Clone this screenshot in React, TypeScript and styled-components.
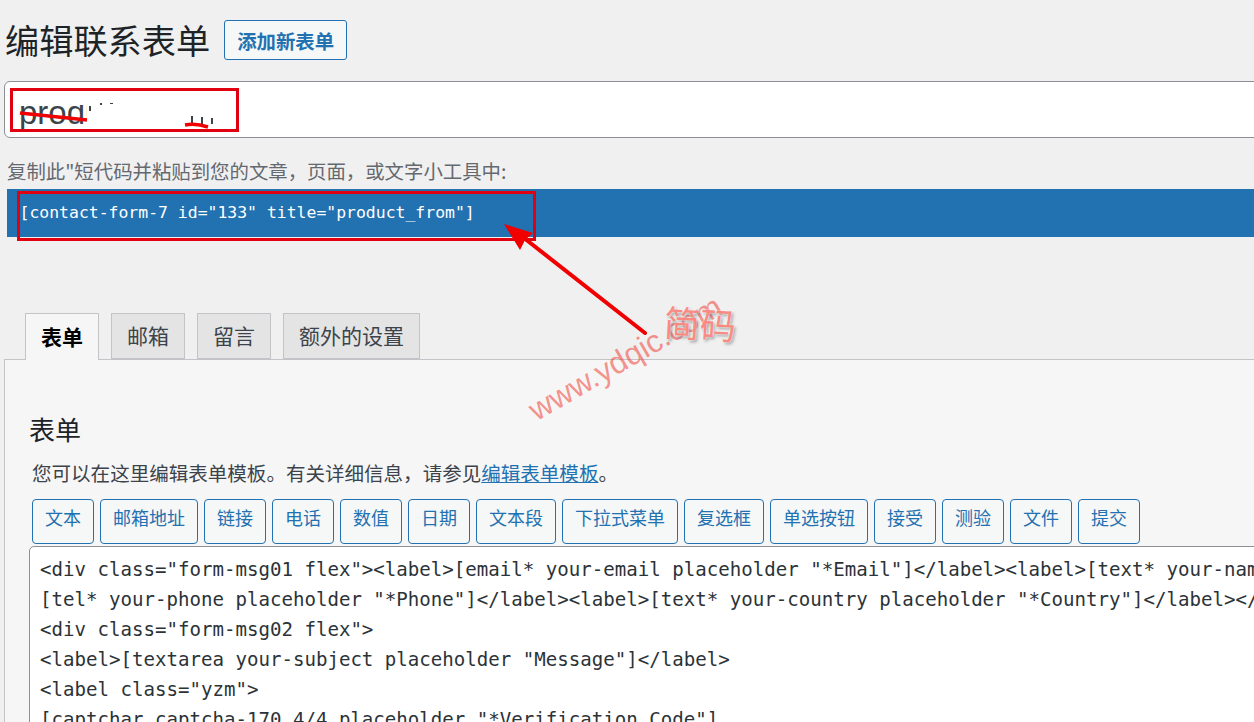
import styled, { createGlobalStyle } from "styled-components";

const cjk = `"Noto Sans CJK SC", "Noto Sans", sans-serif`;
const mono = `"DejaVu Sans Mono", "Liberation Mono", monospace`;

const GlobalStyle = createGlobalStyle`
  html, body {
    margin: 0;
    padding: 0;
    height: 100%;
    overflow: hidden;
    background: #f0f0f0;
  }
`;

const Page = styled.div`
  position: relative;
  width: 1254px;
  height: 722px;
  overflow: hidden;
  font-family: ${cjk};
  color: #3c434a;
`;

const Header = styled.div`
  display: flex;
  align-items: center;
  gap: 14px;
  height: 40px;
  padding: 20px 0 0 5px;
`;

const Title = styled.h1`
  margin: -2px 0 0;
  font-size: 34.2px;
  line-height: 40px;
  font-weight: 400;
  color: #1d2327;
`;

const AddButton = styled.a`
  box-sizing: border-box;
  width: 123px;
  height: 40px;
  display: flex;
  align-items: center;
  justify-content: center;
  border: 1px solid #2271b1;
  border-radius: 3px;
  background: #f6f7f7;
  color: #2271b1;
  font-size: 19.4px;
  font-weight: 700;
`;

const TitleInput = styled.div`
  box-sizing: border-box;
  width: 1270px;
  height: 57px;
  margin: 21px 0 0 4px;
  padding: 9px 0 0 14px;
  border: 1px solid #8c8f94;
  border-radius: 6px;
  background: #fff;
  font-family: "Liberation Sans", Arial, sans-serif;
  font-size: 33px;
  line-height: 44px;
  color: #3c434a;
  overflow: hidden;
`;

const ShortcodeLabel = styled.p`
  margin: 21px 0 0 7px;
  font-size: 19.4px;
  line-height: 24px;
  color: #646970;
`;

const ShortcodeBar = styled.div`
  height: 48px;
  margin: 6px 0 0 7px;
  padding-left: 12.5px;
  background: #2271b1;
  color: #fff;
  font-family: ${mono};
  font-size: 16.45px;
  line-height: 47px;
  white-space: pre;
`;

const TabList = styled.div`
  display: flex;
  gap: 12px;
  height: 46px;
  margin: 76px 0 0 25px;
  position: relative;
  z-index: 1;
`;

const Tab = styled.div<{ $active?: boolean }>`
  box-sizing: border-box;
  height: ${(p) => (p.$active ? "47px" : "46px")};
  padding: 0 15px 2px;
  display: flex;
  align-items: center;
  justify-content: center;
  border: 1px solid #c3c4c7;
  border-bottom: ${(p) => (p.$active ? "0" : "1px solid #c3c4c7")};
  background: ${(p) => (p.$active ? "#f6f6f6" : "#e4e4e4")};
  color: ${(p) => (p.$active ? "#000" : "#3c434a")};
  font-size: 21px;
  font-weight: ${(p) => (p.$active ? 700 : 400)};
`;

const Panel = styled.div`
  box-sizing: border-box;
  width: 1270px;
  height: 400px;
  margin-left: 4px;
  padding: 51px 0 0 24px;
  border: 1px solid #c3c4c7;
  background: #f6f6f6;
`;

const PanelTitle = styled.h2`
  margin: 0;
  font-size: 26px;
  line-height: 36px;
  font-weight: 400;
  color: #1d2327;
`;

const PanelText = styled.p`
  margin: 12px 0 0 3px;
  font-size: 19.55px;
  line-height: 28px;
  color: #3c434a;

  a {
    color: #2271b1;
    text-decoration: underline;
  }
`;

const TagRow = styled.div`
  display: flex;
  gap: 6px;
  margin: 12px 0 0 3px;
`;

const TagButton = styled.a`
  box-sizing: border-box;
  height: 45px;
  padding: 0 12px 9px;
  display: flex;
  align-items: center;
  border: 1px solid #2271b1;
  border-radius: 4px;
  background: #f6f7f7;
  color: #2271b1;
  font-size: 18px;
  white-space: nowrap;
`;

const Editor = styled.div`
  box-sizing: border-box;
  width: 1240px;
  height: 200px;
  margin: 2px 0 0;
  padding: 8px 0 0 10px;
  border: 1px solid #8c8f94;
  border-radius: 5px;
  background: #fff;
  color: #2c3338;
  font-family: ${mono};
  font-size: 19.1px;
  line-height: 30px;
  white-space: pre;
  overflow: hidden;
`;

const RedBox = styled.div<{ $x: number; $y: number; $w: number; $h: number }>`
  position: absolute;
  box-sizing: border-box;
  left: ${(p) => p.$x}px;
  top: ${(p) => p.$y}px;
  width: ${(p) => p.$w}px;
  height: ${(p) => p.$h}px;
  border: 3px solid #e0000f;
`;

const Patch = styled.div<{ $x: number; $y: number; $w: number; $h: number }>`
  position: absolute;
  left: ${(p) => p.$x}px;
  top: ${(p) => p.$y}px;
  width: ${(p) => p.$w}px;
  height: ${(p) => p.$h}px;
  background: #fff;
`;

const Overlay = styled.svg`
  position: absolute;
  left: 0;
  top: 0;
`;

const Watermark = styled.div`
  position: absolute;
  left: 531px;
  top: 392px;
  font-family: "Liberation Sans", Arial, sans-serif;
  font-size: 31.5px;
  line-height: 40px;
  color: rgba(240, 60, 50, 0.55);
  white-space: nowrap;
  transform: rotate(-30deg);
  transform-origin: 0 50%;
`;

const Stamp = styled.div`
  position: absolute;
  left: 664px;
  top: 300px;
  font-size: 36px;
  line-height: 44px;
  color: rgba(250, 110, 100, 0.8);
  text-shadow: 0 0 2px #fff, 2px 2px 3px rgba(90, 90, 90, 0.55);
  transform: rotate(3deg);
`;

const tags = [
  "文本",
  "邮箱地址",
  "链接",
  "电话",
  "数值",
  "日期",
  "文本段",
  "下拉式菜单",
  "复选框",
  "单选按钮",
  "接受",
  "测验",
  "文件",
  "提交",
];

const code = [
  `<div class="form-msg01 flex"><label>[email* your-email placeholder "*Email"]</label><label>[text* your-name`,
  `[tel* your-phone placeholder "*Phone"]</label><label>[text* your-country placeholder "*Country"]</label></div>`,
  `<div class="form-msg02 flex">`,
  `<label>[textarea your-subject placeholder "Message"]</label>`,
  `<label class="yzm">`,
  `[captchar captcha-170 4/4 placeholder "*Verification Code"]`,
].join("\n");

export default function App() {
  return (
    <Page>
      <GlobalStyle />
      <Header>
        <Title>编辑联系表单</Title>
        <AddButton>添加新表单</AddButton>
      </Header>
      <TitleInput>product_from</TitleInput>
      <ShortcodeLabel>复制此"短代码并粘贴到您的文章，页面，或文字小工具中:</ShortcodeLabel>
      <ShortcodeBar>{`[contact-form-7 id="133" title="product_from"]`}</ShortcodeBar>
      <TabList>
        <Tab $active>表单</Tab>
        <Tab>邮箱</Tab>
        <Tab>留言</Tab>
        <Tab>额外的设置</Tab>
      </TabList>
      <Panel>
        <PanelTitle>表单</PanelTitle>
        <PanelText>
          您可以在这里编辑表单模板。有关详细信息，请参见<a>编辑表单模板</a>。
        </PanelText>
        <TagRow>
          {tags.map((tag) => (
            <TagButton key={tag}>{tag}</TagButton>
          ))}
        </TagRow>
        <Editor>{code}</Editor>
      </Panel>

      <Patch $x={87} $y={92} $w={148} $h={36} />
      <Patch $x={66} $y={92} $w={22} $h={13} />
      <RedBox $x={10} $y={88} $w={229} $h={44} />
      <RedBox $x={17} $y={191} $w={519} $h={50} />
      <Watermark>www.ydqic.com</Watermark>
      <Stamp>简码</Stamp>
      <Overlay width="1254" height="722" viewBox="0 0 1254 722">
        <g fill="#3c434a">
          <rect x="89" y="106" width="2" height="5" />
          <rect x="100" y="103" width="2" height="2" />
          <rect x="110" y="103" width="3" height="1" />
          <rect x="191" y="116" width="2" height="9" />
          <rect x="201" y="117" width="2" height="7" />
          <rect x="211" y="118" width="2" height="6" />
        </g>
        <path d="M20 113 L87 120" stroke="#f00000" strokeWidth="3.5" fill="none" />
        <path d="M185 125 Q196 123 208 127" stroke="#f00000" strokeWidth="3.5" fill="none" />
        <path d="M645 333 L524 238" stroke="#f00000" strokeWidth="4" strokeLinecap="round" fill="none" />
        <path d="M504 224 L533 233 L525 240 L520 250 Z" fill="#f00000" />
      </Overlay>
    </Page>
  );
}
